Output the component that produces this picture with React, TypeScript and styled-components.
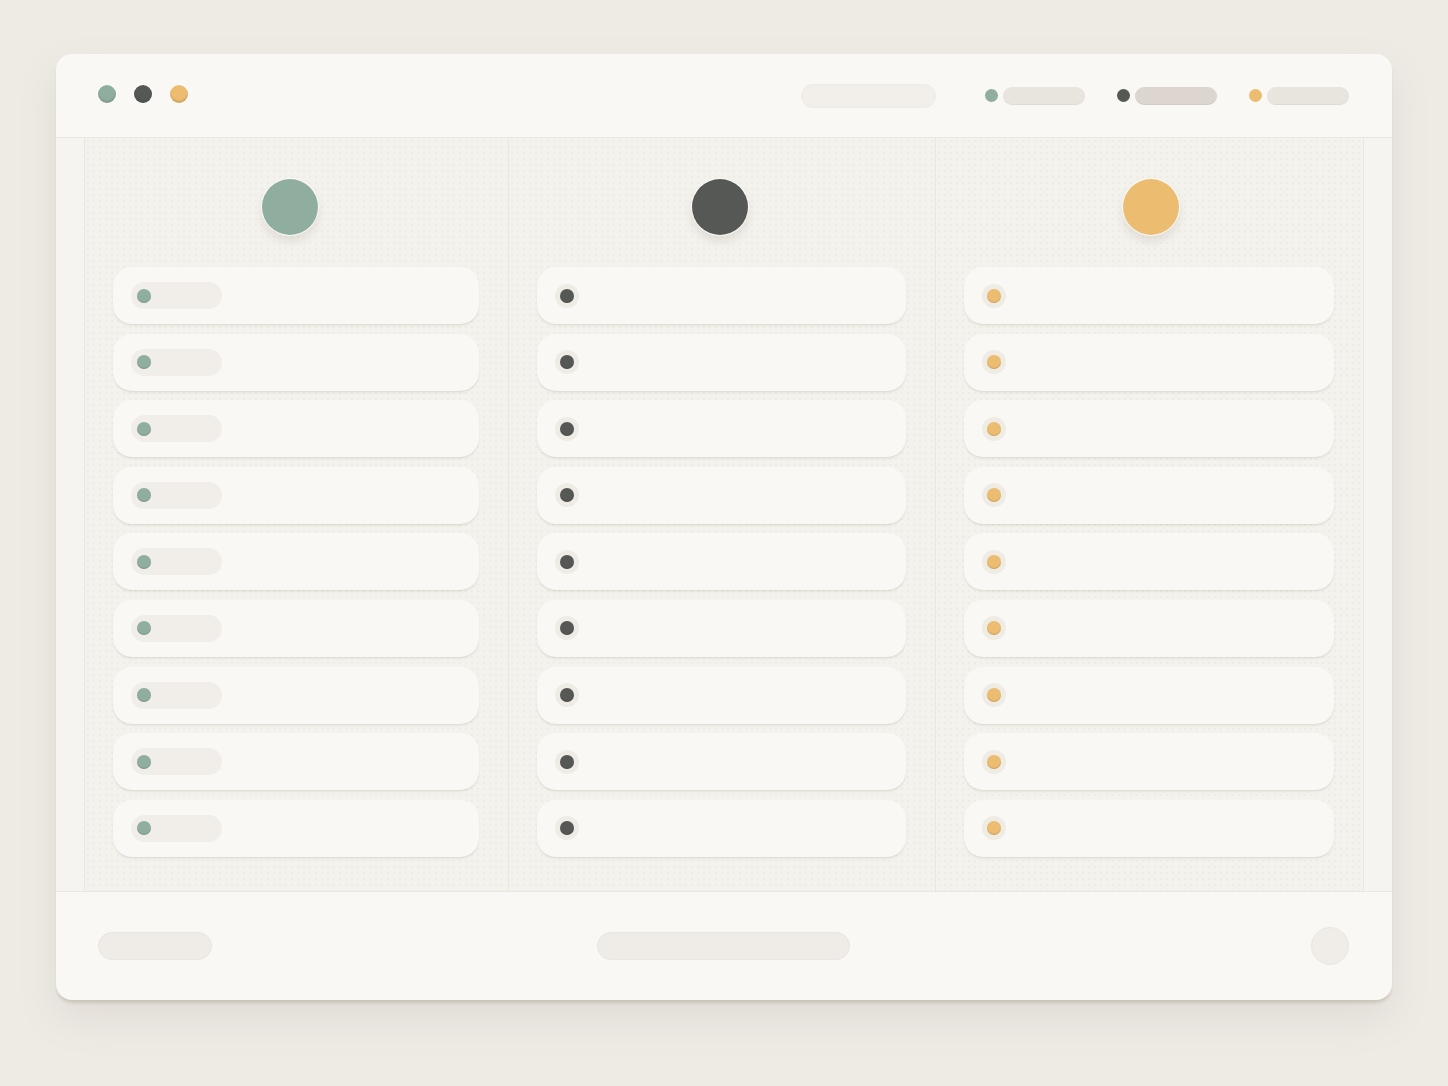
import React from 'react'
import styled, { createGlobalStyle } from 'styled-components'

const colors = {
  sage: '#8fae9f',
  slate: '#565856',
  honey: '#ecbc70',
}

type Tone = keyof typeof colors

const GlobalStyle = createGlobalStyle`
  html, body {
    margin: 0;
    padding: 0;
    background: #eeebe5;
    font-family: "Inter", "Liberation Sans", sans-serif;
  }
`

const columns: { tone: Tone; labelled: boolean; nudge: number }[] = [
  { tone: 'sage', labelled: true, nudge: -6 },
  { tone: 'slate', labelled: false, nudge: -2 },
  { tone: 'honey', labelled: false, nudge: 2 },
]

const rows = [...Array(9)]

const App: React.FC = () => (
  <>
    <GlobalStyle />
    <Page>
      <Window>
        <Header>
          <Traffic>
            <Light tone="sage" />
            <Light tone="slate" />
            <Light tone="honey" />
          </Traffic>
          <HeaderRight>
            <SearchPill />
            <Legend>
              <LegendDot tone="sage" />
              <LegendPill />
            </Legend>
            <Legend>
              <LegendDot tone="slate" />
              <LegendPill active />
            </Legend>
            <Legend>
              <LegendDot tone="honey" />
              <LegendPill />
            </Legend>
          </HeaderRight>
        </Header>
        <Board>
          {columns.map((col) => (
            <Column key={col.tone}>
              <Avatar tone={col.tone} nudge={col.nudge} />
              <CardList>
                {rows.map((_, i) => (
                  // eslint-disable-next-line react/no-array-index-key
                  <Card key={i}>
                    {col.labelled ? (
                      <Tag>
                        <Dot tone={col.tone} />
                      </Tag>
                    ) : (
                      <Halo>
                        <Dot tone={col.tone} />
                      </Halo>
                    )}
                  </Card>
                ))}
              </CardList>
            </Column>
          ))}
        </Board>
        <Footer>
          <FooterPill width={114} />
          <FooterPill width={253} />
          <RoundButton />
        </Footer>
      </Window>
    </Page>
  </>
)

const Page = styled.div`
  width: 1448px;
  height: 1086px;
  padding-top: 54px;
  box-sizing: border-box;
  display: flex;
  justify-content: center;
  align-items: flex-start;
`

const Window = styled.div`
  width: 1336px;
  height: 946px;
  background: #faf8f4;
  border-radius: 16px;
  overflow: hidden;
  display: flex;
  flex-direction: column;
  box-shadow:
    0 4px 3px -1px rgba(150, 138, 118, 0.3),
    0 18px 40px rgba(120, 108, 90, 0.12);
`

const Header = styled.header`
  height: 83px;
  flex-shrink: 0;
  border-bottom: 1px solid #ebe7e0;
  display: flex;
  align-items: center;
  justify-content: space-between;
  padding: 0 43px 0 42px;
`

const Traffic = styled.div`
  display: flex;
  gap: 18px;
  margin-top: -4px;
`

const Light = styled.span<{ tone: Tone }>`
  width: 18px;
  height: 18px;
  border-radius: 50%;
  background: ${(p) => colors[p.tone]};
  box-shadow: 0 0 0 1px rgba(255, 255, 255, 0.7), inset 0 -2px 2px rgba(0, 0, 0, 0.12);
`

const HeaderRight = styled.div`
  display: flex;
  align-items: center;
`

const SearchPill = styled.span`
  width: 135px;
  height: 24px;
  border-radius: 12px;
  background: #f2efea;
  border: 1px solid #eeebe5;
  box-sizing: border-box;
  margin-right: 49px;
`

const Legend = styled.div`
  display: flex;
  align-items: center;
  gap: 5px;
  margin-right: 32px;

  &:last-child {
    margin-right: 0;
  }
`

const LegendDot = styled.span<{ tone: Tone }>`
  width: 13px;
  height: 13px;
  border-radius: 50%;
  background: ${(p) => colors[p.tone]};
`

const LegendPill = styled.span<{ active?: boolean }>`
  width: 82px;
  height: 18px;
  border-radius: 9px;
  background: ${(p) => (p.active ? '#dcd6ce' : '#e8e4de')};
  box-shadow: inset 0 -1px 0 rgba(0, 0, 0, 0.04);
`

const Board = styled.main`
  flex: 1;
  display: grid;
  grid-template-columns: 424px 427px 1fr;
  padding: 0 28px;
  background: #f6f4f0;
`

const Column = styled.section`
  display: flex;
  flex-direction: column;
  align-items: center;
  padding: 41px 29px 0 28px;
  background-color: #f4f2ed;
  background-image: radial-gradient(rgba(160, 150, 135, 0.07) 0.8px, transparent 1px);
  background-size: 6px 6px;
  border-left: 1px solid #ebe7e0;

  &:last-child {
    border-right: 1px solid #ebe7e0;
  }
`

const Avatar = styled.span<{ tone: Tone; nudge: number }>`
  width: 56px;
  height: 56px;
  border-radius: 50%;
  flex-shrink: 0;
  transform: translateX(${(p) => p.nudge}px);
  background: ${(p) => colors[p.tone]};
  box-shadow:
    0 0 0 1px rgba(255, 255, 255, 0.8),
    0 6px 10px rgba(120, 108, 90, 0.16);
`

const CardList = styled.div`
  align-self: stretch;
  margin-top: 32px;
  display: flex;
  flex-direction: column;
  gap: 9.6px;
`

const Card = styled.div`
  height: 57px;
  border-radius: 19px;
  background: #faf8f4;
  display: flex;
  align-items: center;
  padding-left: 18px;
  box-shadow:
    0 2px 2px rgba(150, 138, 118, 0.12),
    0 1px 0 rgba(140, 128, 110, 0.08);
`

const Tag = styled.span`
  width: 91px;
  height: 27px;
  border-radius: 14px;
  background: #f1eeea;
  display: flex;
  align-items: center;
  padding-left: 6px;
  box-sizing: border-box;
`

const Halo = styled.span`
  width: 24px;
  height: 24px;
  border-radius: 50%;
  background: #efebe5;
  display: flex;
  align-items: center;
  justify-content: center;
`

const Dot = styled.span<{ tone: Tone }>`
  width: 14px;
  height: 14px;
  border-radius: 50%;
  background: ${(p) => colors[p.tone]};
  box-shadow: inset 0 -1px 1px rgba(0, 0, 0, 0.15);
`

const Footer = styled.footer`
  height: 108px;
  flex-shrink: 0;
  border-top: 1px solid #ebe7e0;
  display: grid;
  grid-template-columns: 1fr auto 1fr;
  align-items: center;
  padding: 0 43px 0 42px;

  & > :last-child {
    justify-self: end;
  }
`

const FooterPill = styled.span<{ width: number }>`
  width: ${(p) => p.width}px;
  height: 28px;
  border-radius: 14px;
  background: #efece8;
  border: 1px solid #e9e5e0;
  box-sizing: border-box;
`

const RoundButton = styled.span`
  width: 38px;
  height: 38px;
  border-radius: 50%;
  background: #f0ede9;
  border: 1px solid #ebe7e2;
  box-sizing: border-box;
`

export default App
